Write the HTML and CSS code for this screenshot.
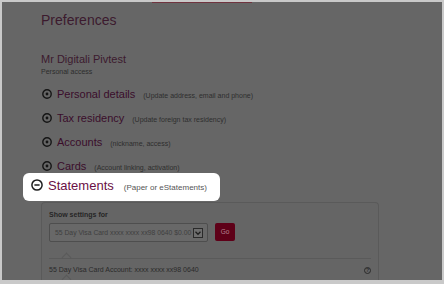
FILE: index.html
```html
<!DOCTYPE html>
<html>
	<head>
		<meta charset="utf-8">
		<title>Preferences</title>
		<link rel="stylesheet" href="styles.css">
	</head>
	<body>
		<div class="frame">
			<!--tab underline at the top of the page-->
			<div class="tabline"></div>

			<div class="page">
				<h1 class="title">Preferences</h1>
				<div class="name">Mr Digitali Pivtest</div>
				<div class="access">Personal access</div>

				<!--collapsed preference sections-->
				<div class="prefs">
					<div class="pref"><svg class="dot" width="10" height="10" viewBox="0 0 10 10"><circle cx="5" cy="5" r="4.2" fill="none" stroke="#151515" stroke-width="1.4"/><circle cx="5" cy="5" r="1.4" fill="#151515"/></svg><span class="pref-name">Personal details</span><span class="hint">(Update address, email and phone)</span></div>
					<div class="pref"><svg class="dot" width="10" height="10" viewBox="0 0 10 10"><circle cx="5" cy="5" r="4.2" fill="none" stroke="#151515" stroke-width="1.4"/><circle cx="5" cy="5" r="1.4" fill="#151515"/></svg><span class="pref-name">Tax residency</span><span class="hint">(Update foreign tax residency)</span></div>
					<div class="pref"><svg class="dot" width="10" height="10" viewBox="0 0 10 10"><circle cx="5" cy="5" r="4.2" fill="none" stroke="#151515" stroke-width="1.4"/><circle cx="5" cy="5" r="1.4" fill="#151515"/></svg><span class="pref-name">Accounts</span><span class="hint">(nickname, access)</span></div>
					<div class="pref"><svg class="dot" width="10" height="10" viewBox="0 0 10 10"><circle cx="5" cy="5" r="4.2" fill="none" stroke="#151515" stroke-width="1.4"/><circle cx="5" cy="5" r="1.4" fill="#151515"/></svg><span class="pref-name">Cards</span><span class="hint">(Account linking, activation)</span></div>
				</div>

				<!--highlighted step of the tour-->
				<div class="spot"><svg class="minus" width="12" height="12" viewBox="0 0 12 12"><circle cx="6" cy="6" r="5.1" fill="none" stroke="#1e1e1e" stroke-width="1.5"/><line x1="3.4" y1="6" x2="8.6" y2="6" stroke="#1e1e1e" stroke-width="1.5"/></svg><span class="spot-name">Statements</span><span class="spot-hint">(Paper or eStatements)</span></div>

				<!--statement settings panel-->
				<div class="panel">
					<div class="label">Show settings for</div>
					<div class="choose">
						<div class="select">
							<span class="select-text">55 Day Visa Card xxxx xxxx xx98 0640 $0.00</span>
							<span class="arrow"><svg width="8" height="8" viewBox="0 0 8 8"><polyline points="1.5,2.8 4,5.3 6.5,2.8" fill="none" stroke="#1e1e1e" stroke-width="1.3"/></svg></span>
						</div>
						<div class="go">Go</div>
					</div>

					<div class="acct">
						<span>55 Day Visa Card Account: xxxx xxxx xx98 0640</span>
						<span class="help">?</span>
					</div>
					<!--next account starts just below the fold-->
					<div class="acct acct-next"></div>
				</div>
			</div>
		</div>
	</body>
</html>
```

FILE: styles.css
```css
body {
	margin: 0;
	font-family: "Liberation Sans", Arial, sans-serif;
}

.frame {
	width: 440px;
	height: 278px;
	border: 2px solid #c9c9c9;
	border-bottom-width: 4px;
	background-color: #666;
	overflow: hidden;
}

.tabline {
	margin-left: 150px;
	width: 100px;
	height: 1px;
	background-color: #70343f;
}

.page {
	padding-left: 39px;
}

.title {
	margin: 0;
	font-size: 14px;
	font-weight: normal;
	line-height: 34px;
	color: #3c1a2e;
}

.name {
	margin-top: 14px;
	font-size: 11px;
	line-height: 16px;
	color: #3c1a2e;
}

.access {
	font-size: 7px;
	line-height: 10px;
	color: #2d2d2d;
}

.prefs {
	margin-top: 4.5px;
}

.pref {
	height: 24px;
	font-size: 11px;
	line-height: 24px;
	white-space: nowrap;
}

.dot {
	vertical-align: -1.5px;
	margin: 0 5px 0 1px;
}

.pref-name {
	color: #3a0d2b;
}

.hint {
	margin-left: 8px;
	font-size: 7px;
	color: #2e2e2e;
}

/* spotlight box, sits above the dimmed page */
.spot {
	margin: -4.5px 0 0 -18px;
	width: 189px;
	height: 28px;
	padding-left: 8px;
	background-color: #fff;
	border-radius: 6px;
	font-size: 13px;
	line-height: 26px;
	white-space: nowrap;
}

.minus {
	vertical-align: -1.3px;
	margin-right: 5px;
}

.spot-name {
	color: #6a0f45;
}

.spot-hint {
	margin-left: 10px;
	font-size: 8px;
	color: #555;
}

.panel {
	margin-top: 1px;
	width: 322px;
	padding: 7px 7px 0;
	border: 1px solid #5a5a5a;
	border-bottom: none;
	border-radius: 4px 4px 0 0;
	background-color: #656565;
}

.label {
	font-size: 7px;
	font-weight: bold;
	line-height: 10px;
	color: #262626;
}

.choose {
	display: flex;
	gap: 7px;
	margin-top: 3px;
}

.select {
	display: flex;
	align-items: center;
	width: 148px;
	height: 17px;
	padding: 0 4px 0 5px;
	border: 1px solid #4e4e4e;
	border-radius: 2px;
	background-color: #686868;
	font-size: 6.8px;
	color: #3f3f3f;
}

.select-text {
	flex: 1;
	white-space: nowrap;
}

.arrow {
	display: flex;
	width: 8px;
	height: 8px;
	border: 1px solid #2a2a2a;
	background-color: #6e6e6e;
}

.go {
	width: 20px;
	height: 18px;
	border-radius: 2px;
	background-color: #5e0018;
	font-size: 6.5px;
	line-height: 18px;
	text-align: center;
	color: #b58090;
}

.acct {
	position: relative;
	display: flex;
	align-items: center;
	justify-content: space-between;
	margin-top: 16px;
	padding: 6px 0 5px;
	height: 10px;
	border-top: 1px solid #5a5a5a;
	font-size: 7px;
	line-height: 10px;
	color: #2a2a2a;
}

.acct-next {
	margin-top: 0;
}

/* little pointer sitting on the divider */
.acct:before {
	content: "";
	position: absolute;
	top: -5px;
	left: 14px;
	width: 6px;
	height: 6px;
	border-top: 1px solid #5a5a5a;
	border-left: 1px solid #5a5a5a;
	transform: rotate(45deg);
}

.help {
	width: 5px;
	height: 5px;
	border: 1px solid #2a2a2a;
	border-radius: 50%;
	font-size: 5px;
	font-weight: bold;
	line-height: 5px;
	text-align: center;
	color: #2a2a2a;
}
```
